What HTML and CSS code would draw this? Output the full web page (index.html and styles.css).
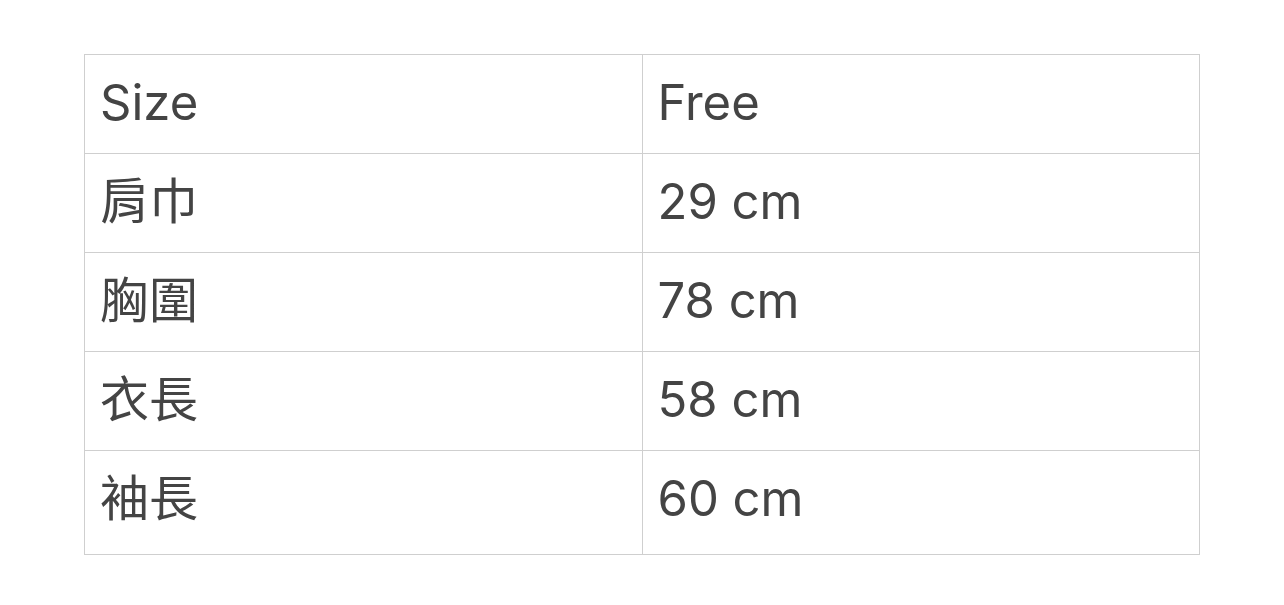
FILE: index.html
```html
<!DOCTYPE html>
<html lang="zh-Hant">
<head>
<meta charset="utf-8">
<link rel="stylesheet" href="styles.css">
</head>
<body>
<table class="size-table">
  <tr><td>Size</td><td>Free</td></tr>
  <tr><td>肩巾</td><td>29 cm</td></tr>
  <tr><td>胸圍</td><td>78 cm</td></tr>
  <tr><td>衣長</td><td>58 cm</td></tr>
  <tr class="last"><td>袖長</td><td>60 cm</td></tr>
</table>
</body>
</html>
```
FILE: styles.css
```css
html, body {
  margin: 0;
  padding: 0;
  background: #fff;
}
body {
  padding: 54px 84px 0 84px;
  font-family: Inter, "Noto Sans CJK TC", sans-serif;
  color: #444;
}
.size-table {
  width: 1116px;
  border-collapse: collapse;
  table-layout: fixed;
}
.size-table td {
  border: 1px solid #cfcfcf;
  height: 99px;
  padding: 0 15px 4px 15px;
  font-size: 49px;
  line-height: 1;
  vertical-align: middle;
  box-sizing: border-box;
}
.size-table tr.last td {
  height: 104px;
  padding-bottom: 9px;
}
```
